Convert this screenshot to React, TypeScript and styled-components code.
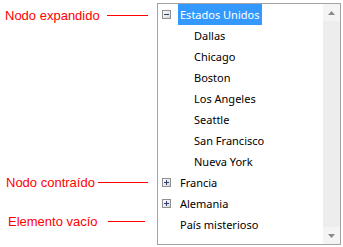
import React from "react";
import styled, { createGlobalStyle } from "styled-components";

const GlobalStyle = createGlobalStyle`
  html, body { margin: 0; padding: 0; background: #ffffff; }
  body { width: 343px; height: 247px; overflow: hidden; }
`;

const Page = styled.div`
  display: flex;
  align-items: flex-start;
  width: 343px;
  height: 247px;
`;

const Annotations = styled.div`
  display: flex;
  flex-direction: column;
  width: 157px;
  flex: none;
`;

const Annotation = styled.div<{ $top: number; $indent: number }>`
  display: flex;
  align-items: center;
  height: 15px;
  margin-top: ${(p) => p.$top}px;
  padding-left: ${(p) => p.$indent}px;
  font-family: "Liberation Sans", Arial, sans-serif;
  font-size: 13px;
  line-height: 15px;
  color: #ff0000;
  white-space: nowrap;
`;

const Leader = styled.span<{ $width: number; $right: number }>`
  display: block;
  margin-left: auto;
  margin-right: ${(p) => p.$right}px;
  width: ${(p) => p.$width}px;
  height: 1px;
  background: #ff0000;
`;

const TreeBox = styled.div`
  display: flex;
  margin-top: 3px;
  width: 184px;
  height: 242px;
  box-sizing: border-box;
  border: 1px solid #a3a3a3;
  background: #ffffff;
  flex: none;
`;

const TreeList = styled.div`
  flex: 1;
  display: flex;
  flex-direction: column;
  font-family: "Noto Sans", "Segoe UI", sans-serif;
  font-size: 11px;
  color: #000000;
`;

const Row = styled.div<{ $level: number }>`
  display: flex;
  align-items: center;
  height: 21px;
  padding-left: ${(p) => 4 + p.$level * 14}px;
`;

const ExpanderSlot = styled.div`
  width: 16px;
  height: 21px;
  display: flex;
  align-items: center;
  flex: none;
`;

const Label = styled.span<{ $selected?: boolean }>`
  display: block;
  height: 21px;
  line-height: 21px;
  padding: 0 3px 0 2px;
  white-space: nowrap;
  background: ${(p) => (p.$selected ? "#3399ff" : "transparent")};
  color: ${(p) => (p.$selected ? "#ffffff" : "#000000")};
`;

const ScrollBar = styled.div`
  width: 17px;
  flex: none;
  display: flex;
  flex-direction: column;
  background: #f0f0f0;
`;

const ScrollButton = styled.div`
  height: 17px;
  flex: none;
  display: flex;
  align-items: center;
  justify-content: center;
  background: #f4f4f4;
`;

const Track = styled.div`
  flex: 1;
  background: #ededed;
`;

function Expander({ expanded }: { expanded: boolean }) {
  const id = expanded ? "gm" : "gp";
  return (
    <svg width="9" height="9" viewBox="0 0 9 9">
      <defs>
        <linearGradient id={id} x1="0" y1="0" x2="1" y2="1">
          <stop offset="0" stopColor="#ffffff" />
          <stop offset="1" stopColor="#d6d6d6" />
        </linearGradient>
      </defs>
      <rect x="0.5" y="0.5" width="8" height="8" fill={`url(#${id})`} stroke="#8f8f8f" />
      <rect x="2" y="4" width="5" height="1" fill="#2b3f72" />
      {!expanded && <rect x="4" y="2" width="1" height="5" fill="#2b3f72" />}
    </svg>
  );
}

function Arrow({ up }: { up: boolean }) {
  return (
    <svg width="7" height="4" viewBox="0 0 7 4">
      <polygon points={up ? "3.5,0 7,4 0,4" : "0,0 7,0 3.5,4"} fill="#8a8a8a" />
    </svg>
  );
}

type Node = { label: string; level: number; expander?: "open" | "closed"; selected?: boolean };

const nodes: Node[] = [
  { label: "Estados Unidos", level: 0, expander: "open", selected: true },
  { label: "Dallas", level: 1 },
  { label: "Chicago", level: 1 },
  { label: "Boston", level: 1 },
  { label: "Los Angeles", level: 1 },
  { label: "Seattle", level: 1 },
  { label: "San Francisco", level: 1 },
  { label: "Nueva York", level: 1 },
  { label: "Francia", level: 0, expander: "closed" },
  { label: "Alemania", level: 0, expander: "closed" },
  { label: "País misterioso", level: 0 },
];

export default function App() {
  return (
    <>
      <GlobalStyle />
      <Page>
        <Annotations>
          <Annotation $top={8} $indent={5}>
            Nodo expandido
            <Leader $width={41} $right={9} />
          </Annotation>
          <Annotation $top={152} $indent={6}>
            Nodo contraído
            <Leader $width={50} $right={9} />
          </Annotation>
          <Annotation $top={24} $indent={8}>
            Elemento vacío
            <Leader $width={37} $right={12} />
          </Annotation>
        </Annotations>
        <TreeBox>
          <TreeList>
            {nodes.map((n) => (
              <Row key={n.label} $level={n.level}>
                <ExpanderSlot>
                  {n.expander && <Expander expanded={n.expander === "open"} />}
                </ExpanderSlot>
                <Label $selected={n.selected}>{n.label}</Label>
              </Row>
            ))}
          </TreeList>
          <ScrollBar>
            <ScrollButton>
              <Arrow up />
            </ScrollButton>
            <Track />
            <ScrollButton>
              <Arrow up={false} />
            </ScrollButton>
          </ScrollBar>
        </TreeBox>
      </Page>
    </>
  );
}
